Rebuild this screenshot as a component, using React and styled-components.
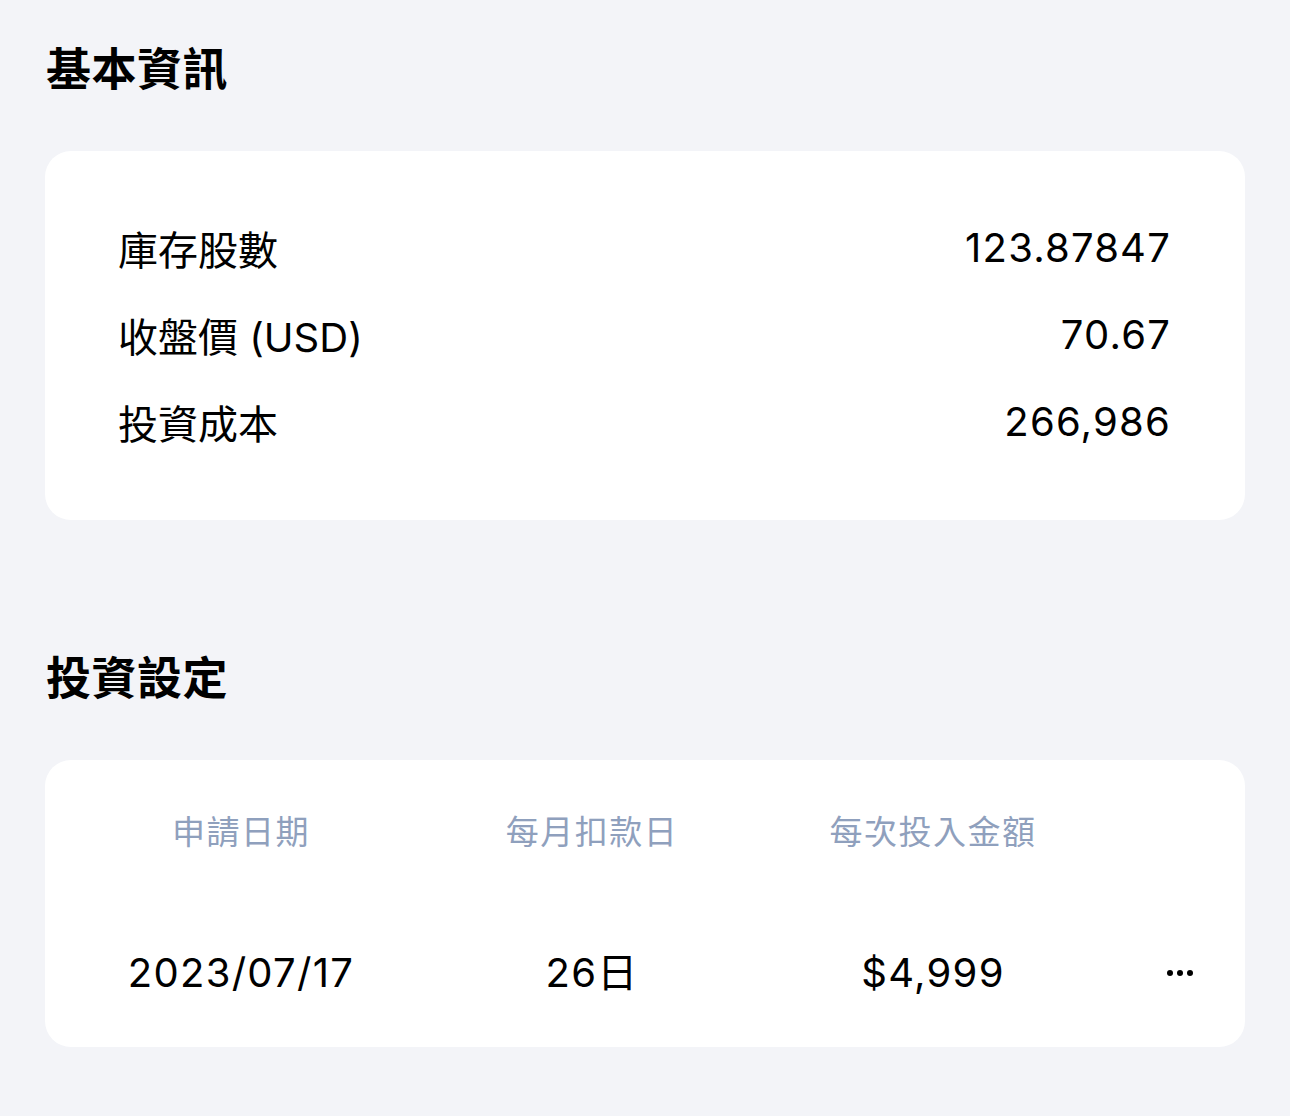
import React from 'react';
import styled, { createGlobalStyle } from 'styled-components';

const GlobalStyle = createGlobalStyle`
  html, body {
    margin: 0;
    padding: 0;
    background: #f3f4f8;
  }
  body {
    font-family: Inter, "Noto Sans CJK TC", sans-serif;
    color: #000;
  }
`;

const basicRows = [
  { label: '庫存股數', value: '123.87847' },
  { label: '收盤價 (USD)', value: '70.67' },
  { label: '投資成本', value: '266,986' },
];

const planCols = [
  { head: '申請日期', value: '2023/07/17' },
  { head: '每月扣款日', value: '26日' },
  { head: '每次投入金額', value: '$4,999' },
];

const App = () => {
  return (
    <Page>
      <GlobalStyle />
      <Title>基本資訊</Title>
      <InfoCard>
        {basicRows.map((r) => (
          <InfoRow key={r.label}>
            <Label>{r.label}</Label>
            <Num>{r.value}</Num>
          </InfoRow>
        ))}
      </InfoCard>

      <Title $gap>投資設定</Title>
      <PlanCard>
        {planCols.map((c) => (
          <Head key={c.head}>{c.head}</Head>
        ))}
        <span />
        {planCols.map((c) => (
          <Value key={c.value}>{c.value}</Value>
        ))}
        <More aria-label="more">
          <Dot />
          <Dot />
          <Dot />
        </More>
      </PlanCard>
    </Page>
  );
};

const Page = styled.div`
  padding: 44px 45px 69px;
  min-height: 1116px;
  box-sizing: border-box;
`;

const Title = styled.h2`
  margin: ${(p) => (p.$gap ? '133px' : '0')} 0 55px 1px;
  font-size: 45px;
  line-height: 52px;
  font-weight: 700;
  letter-spacing: 0.5px;
`;

const InfoCard = styled.div`
  background: #fff;
  border-radius: 26px;
  padding: 53px 74px 55px 73px;
`;

const InfoRow = styled.div`
  display: flex;
  justify-content: space-between;
  align-items: center;
  height: 87px;
  font-size: 40px;
  font-weight: 400;
`;

const Label = styled.span`
  letter-spacing: 0;
`;

const Num = styled.span`
  letter-spacing: 1.2px;
`;

const PlanCard = styled.div`
  background: #fff;
  border-radius: 26px;
  padding: 50px 52px 50px 23px;
  display: grid;
  grid-template-columns: 346px 356px 326px 1fr;
  row-gap: 95px;
  align-items: center;
`;

const Head = styled.div`
  text-align: center;
  font-size: 33px;
  line-height: 44px;
  letter-spacing: 1.5px;
  color: #8fa0bd;
`;

const Value = styled.div`
  text-align: center;
  font-size: 40px;
  line-height: 48px;
  letter-spacing: 1.3px;
`;

const More = styled.div`
  display: flex;
  gap: 4px;
  justify-content: flex-end;
`;

const Dot = styled.span`
  width: 6px;
  height: 6px;
  border-radius: 50%;
  background: #000;
`;

export default App;
